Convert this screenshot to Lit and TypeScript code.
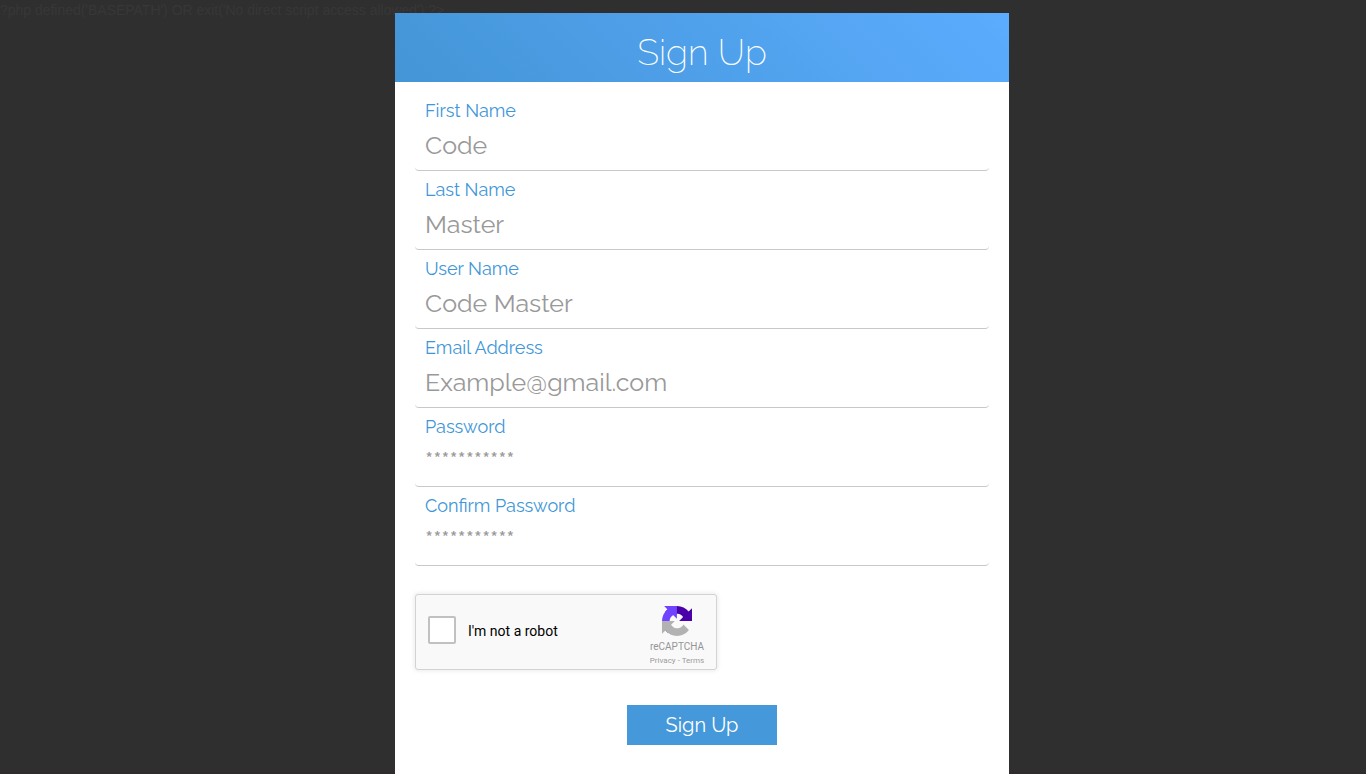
import { LitElement, html, css } from "lit";
import { customElement } from "lit/decorators.js";

const FIELDS = [
  { label: "First Name", value: "Code", secret: false },
  { label: "Last Name", value: "Master", secret: false },
  { label: "User Name", value: "Code Master", secret: false },
  { label: "Email Address", value: "Example@gmail.com", secret: false },
  { label: "Password", value: "***********", secret: true },
  { label: "Confirm Password", value: "***********", secret: true },
];

@customElement("app-root")
export class AppRoot extends LitElement {
  static styles = css`
    :host {
      display: block;
      position: relative;
      height: 774px;
      overflow: hidden;
      background: #2f2f2f;
      font-family: Raleway, Lato, sans-serif;
      box-sizing: border-box;
    }
    .notice {
      position: absolute;
      top: 2px;
      left: 0;
      font: 14px/16px "Liberation Sans", sans-serif;
      letter-spacing: -0.02px;
      color: #373737;
      white-space: nowrap;
    }
    .edge {
      position: absolute;
      left: 0;
      right: 0;
      bottom: 0;
      height: 4px;
      background: linear-gradient(#2f2f2f, #30292f);
    }
    .page {
      position: relative;
      padding: 13px 0 0 395px;
    }
    .card {
      width: 614px;
      height: 761px;
      background: #fff;
    }
    svg {
      display: block;
    }
    .head {
      height: 69px;
      box-sizing: border-box;
      padding-top: 18px;
      text-align: center;
      background: linear-gradient(45deg, #4395d6, #5cacff);
    }
    .title {
      margin: 0;
      font-size: 36px;
      line-height: 42px;
      font-weight: 200;
      color: #fff;
    }
    .form {
      padding: 10px 20px 0;
    }
    .field {
      height: 79px;
      box-sizing: border-box;
      padding: 8px 10px 0;
      border-bottom: 1px solid #c8c8c8;
      border-radius: 4px;
    }
    .label {
      font-size: 18px;
      line-height: 21px;
      color: #4096d8;
    }
    .value {
      margin-top: 10px;
      font-size: 25px;
      line-height: 29px;
      color: #999;
    }
    .secret {
      margin-top: 9px;
      font-weight: 500;
      letter-spacing: -0.1px;
    }
    .captcha {
      margin-top: 28px;
      width: 302px;
      height: 76px;
      box-sizing: border-box;
      border: 1px solid #d3d3d3;
      border-radius: 3px;
      background: #f9f9f9;
      box-shadow: 0 0 4px 1px rgba(0, 0, 0, 0.08);
      display: flex;
      align-items: flex-start;
      padding-left: 12px;
      font-family: Roboto, sans-serif;
    }
    .box {
      width: 28px;
      height: 28px;
      margin-top: 21px;
      box-sizing: border-box;
      border: 2px solid #c1c1c1;
      border-radius: 2px;
      background: #fff;
    }
    .robot {
      margin: 28px 0 0 12px;
      font-size: 14px;
      line-height: 17px;
      color: #000;
    }
    .brand {
      margin: 11px 11px 0 auto;
      width: 56px;
      display: flex;
      flex-direction: column;
      align-items: center;
      color: #9b9b9b;
      white-space: nowrap;
    }
    .brand-name {
      margin-top: 5px;
      font-size: 10px;
      line-height: 12px;
      color: #959595;
    }
    .legal {
      margin-top: 3px;
      font-size: 8px;
      line-height: 10px;
    }
    .submit {
      display: block;
      margin: 35px auto 0;
      border: 0;
      padding: 0;
      width: 150px;
      height: 40px;
      background: #4598da;
      color: #fff;
      font: 400 20px/40px Raleway, Lato, sans-serif;
    }
  `;

  render() {
    return html`
      <div class="notice">?php defined('BASEPATH') OR exit('No direct script access allowed');?&gt;</div>
      <div class="edge"></div>
      <main class="page">
        <section class="card">
          <header class="head"><h1 class="title">Sign Up</h1></header>
          <div class="form">
            ${FIELDS.map(
              (f) => html`<div class="field">
                <div class="label">${f.label}</div>
                <div class="value ${f.secret ? "secret" : ""}">${f.value}</div>
              </div>`
            )}
            <div class="captcha">
              <div class="box"></div>
              <div class="robot">I'm not a robot</div>
              <div class="brand">
                <svg width="30" height="30" viewBox="0 0 64 64">
                  <path fill="#4a00a8" d="M64 31.955l-.033-1.37V4.687l-7.16 7.16C50.948 4.674 42.033.093 32.05.093c-10.4 0-19.622 4.96-25.458 12.64l11.736 11.86a15.55 15.55 0 0 1 4.754-5.334c2.05-1.6 4.952-2.906 8.968-2.906.485 0 .86.057 1.135.163 4.976.393 9.288 3.14 11.828 7.124l-8.307 8.307L64 31.953" />
                  <path fill="#7044ff" d="M31.862.094l-1.37.033H4.594l7.16 7.16C4.58 13.147 0 22.06 0 32.046c0 10.4 4.96 19.622 12.64 25.458L24.5 45.768a15.55 15.55 0 0 1-5.334-4.754c-1.6-2.05-2.906-4.952-2.906-8.968 0-.485.057-.86.163-1.135.393-4.976 3.14-9.288 7.124-11.828l8.307 8.307L31.86.095" />
                  <path fill="#b2b2b2" d="M.001 32.045l.033 1.37v25.898l7.16-7.16c5.86 7.173 14.774 11.754 24.76 11.754 10.4 0 19.622-4.96 25.458-12.64l-11.736-11.86a15.55 15.55 0 0 1-4.754 5.334c-2.05 1.6-4.952 2.906-8.968 2.906-.485 0-.86-.057-1.135-.163-4.976-.393-9.288-3.14-11.828-7.124l8.307-8.307c-10.522.04-22.4.066-27.295-.005" />
                </svg>
                <div class="brand-name">reCAPTCHA</div>
                <div class="legal">Privacy - Terms</div>
              </div>
            </div>
            <button class="submit">Sign Up</button>
          </div>
        </section>
      </main>
    `;
  }
}
